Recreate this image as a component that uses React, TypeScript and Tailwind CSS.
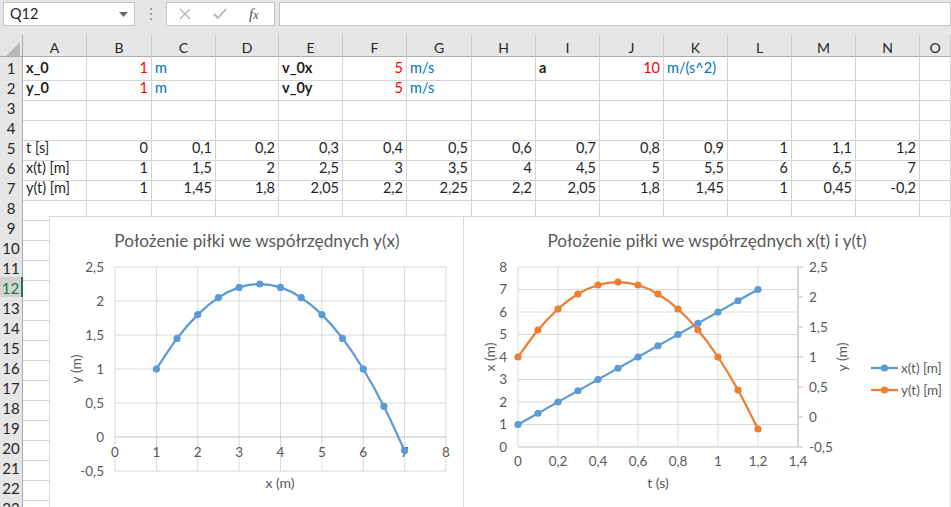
import React from 'react';

const letters = ['A', 'B', 'C', 'D', 'E', 'F', 'G', 'H', 'I', 'J', 'K', 'L', 'M', 'N', 'O'];

type Cell = { v: string; cls?: string; right?: boolean };

const t = ['0', '0,1', '0,2', '0,3', '0,4', '0,5', '0,6', '0,7', '0,8', '0,9', '1', '1,1', '1,2'];
const xs = ['1', '1,5', '2', '2,5', '3', '3,5', '4', '4,5', '5', '5,5', '6', '6,5', '7'];
const ys = ['1', '1,45', '1,8', '2,05', '2,2', '2,25', '2,2', '2,05', '1,8', '1,45', '1', '0,45', '-0,2'];

const red = 'text-[#ff0000]';
const blue = 'text-[#0070c0]';

// cell contents, keyed by row then column index (0 = A)
const rows: Record<number, Record<number, Cell>> = {
  1: {
    0: { v: 'x_0', cls: 'font-bold' },
    1: { v: '1', cls: red, right: true },
    2: { v: 'm', cls: blue },
    4: { v: 'v_0x', cls: 'font-bold' },
    5: { v: '5', cls: red, right: true },
    6: { v: 'm/s', cls: blue },
    8: { v: 'a', cls: 'font-bold' },
    9: { v: '10', cls: red, right: true },
    10: { v: 'm/(s^2)', cls: blue },
  },
  2: {
    0: { v: 'y_0', cls: 'font-bold' },
    1: { v: '1', cls: red, right: true },
    2: { v: 'm', cls: blue },
    4: { v: 'v_0y', cls: 'font-bold' },
    5: { v: '5', cls: red, right: true },
    6: { v: 'm/s', cls: blue },
  },
  5: Object.fromEntries([[0, { v: 't [s]' }], ...t.map((v, i) => [i + 1, { v, right: true }])]),
  6: Object.fromEntries([[0, { v: 'x(t) [m]' }], ...xs.map((v, i) => [i + 1, { v, right: true }])]),
  7: Object.fromEntries([[0, { v: 'y(t) [m]' }], ...ys.map((v, i) => [i + 1, { v, right: true }])]),
};

const smoothPath = (pts: [number, number][]) => {
  let d = `M${pts[0][0]},${pts[0][1]}`;
  for (let i = 0; i < pts.length - 1; i++) {
    const p0 = pts[i - 1] || pts[i];
    const p1 = pts[i];
    const p2 = pts[i + 1];
    const p3 = pts[i + 2] || p2;
    const c1x = p1[0] + (p2[0] - p0[0]) / 6;
    const c1y = p1[1] + (p2[1] - p0[1]) / 6;
    const c2x = p2[0] - (p3[0] - p1[0]) / 6;
    const c2y = p2[1] - (p3[1] - p1[1]) / 6;
    d += ` C${c1x},${c1y} ${c2x},${c2y} ${p2[0]},${p2[1]}`;
  }
  return d;
};

const xNum = [1, 1.5, 2, 2.5, 3, 3.5, 4, 4.5, 5, 5.5, 6, 6.5, 7];
const yNum = [1, 1.45, 1.8, 2.05, 2.2, 2.25, 2.2, 2.05, 1.8, 1.45, 1, 0.45, -0.2];
const tNum = [0, 0.1, 0.2, 0.3, 0.4, 0.5, 0.6, 0.7, 0.8, 0.9, 1, 1.1, 1.2];

const BLUE = '#5b9bd5';
const ORANGE = '#ed7d31';
const GRID = '#d9d9d9';
const LABEL = '#595959';
const TITLE_SIZE = '17.2';
const AXIS_SIZE = '14';

const fmt = (n: number) => String(Math.round(n * 10) / 10).replace('.', ',');

const ChartYX: React.FC = () => {
  const sx = (v: number) => 65 + v * 41.375;
  const sy = (v: number) => 50 + (2.5 - v) * 68;
  const pts = xNum.map((x, i) => [sx(x), sy(yNum[i])] as [number, number]);
  const yTicks = [2.5, 2, 1.5, 1, 0.5, 0, -0.5];
  return (
    <div className="absolute left-[49px] top-[216px] w-[415px] h-[300px] bg-white border border-[#d9d9d9]">
      <svg width="415" height="300" className="font-['Lato',sans-serif]">
        <text x="207" y="30" textAnchor="middle" fontSize={TITLE_SIZE} fill={LABEL}>
          Położenie piłki we współrzędnych y(x)
        </text>
        {[0, 1, 2, 3, 4, 5, 6, 7, 8].map((v) => (
          <line key={v} x1={sx(v)} x2={sx(v)} y1={50} y2={254} stroke={GRID} />
        ))}
        {yTicks.map((v) => (
          <line key={v} x1={65} x2={396} y1={sy(v)} y2={sy(v)} stroke={v === 0 ? '#bfbfbf' : GRID} />
        ))}
        {yTicks.map((v) => (
          <text key={v} x="54" y={sy(v) + 4.5} textAnchor="end" fontSize="13.5" fill={LABEL}>
            {fmt(v)}
          </text>
        ))}
        {[0, 1, 2, 3, 4, 5, 6, 7, 8].map((v) => (
          <text key={v} x={sx(v)} y="240" textAnchor="middle" fontSize="13.5" fill={LABEL}>
            {v}
          </text>
        ))}
        <text x="230" y="271" textAnchor="middle" fontSize={AXIS_SIZE} fill={LABEL}>x (m)</text>
        <text transform="translate(31,152) rotate(-90)" textAnchor="middle" fontSize={AXIS_SIZE} fill={LABEL}>y (m)</text>
        <path d={smoothPath(pts)} fill="none" stroke={BLUE} strokeWidth="2.25" />
        {pts.map((p, i) => (
          <circle key={i} cx={p[0]} cy={p[1]} r="3.6" fill={BLUE} />
        ))}
      </svg>
    </div>
  );
};

const ChartT: React.FC = () => {
  const sx = (v: number) => 54 + v * 200;
  const syL = (v: number) => 230 - v * 22.5;
  const syR = (v: number) => 50 + (2.5 - v) * 60;
  const xPts = tNum.map((tv, i) => [sx(tv), syL(xNum[i])] as [number, number]);
  const yPts = tNum.map((tv, i) => [sx(tv), syR(yNum[i])] as [number, number]);
  const rTicks = [2.5, 2, 1.5, 1, 0.5, 0, -0.5];
  const tTicks = [0, 0.2, 0.4, 0.6, 0.8, 1, 1.2, 1.4];
  return (
    <div className="absolute left-[463px] top-[216px] w-[488px] h-[300px] bg-white border border-[#d9d9d9]">
      <svg width="488" height="300" className="font-['Lato',sans-serif]">
        <text x="243" y="30" textAnchor="middle" fontSize={TITLE_SIZE} fill={LABEL}>
          Położenie piłki we współrzędnych x(t) i y(t)
        </text>
        {tTicks.map((v) => (
          <line key={v} x1={sx(v)} x2={sx(v)} y1={50} y2={230} stroke={GRID} />
        ))}
        {[1, 2, 3, 4, 5, 6, 7, 8].map((v) => (
          <line key={v} x1={54} x2={334} y1={syL(v)} y2={syL(v)} stroke={GRID} />
        ))}
        <line x1={54} x2={334} y1={230} y2={230} stroke="#bfbfbf" />
        <line x1={334} x2={334} y1={50} y2={230} stroke="#bfbfbf" />
        {rTicks.map((v) => (
          <line key={v} x1={334} x2={339} y1={syR(v)} y2={syR(v)} stroke="#bfbfbf" />
        ))}
        {[0, 1, 2, 3, 4, 5, 6, 7, 8].map((v) => (
          <text key={v} x="43" y={syL(v) + 4.5} textAnchor="end" fontSize="13.5" fill={LABEL}>
            {v}
          </text>
        ))}
        {rTicks.map((v) => (
          <text key={v} x="345" y={syR(v) + 4.5} fontSize="13.5" fill={LABEL}>
            {fmt(v)}
          </text>
        ))}
        {tTicks.map((v) => (
          <text key={v} x={sx(v)} y="249" textAnchor="middle" fontSize="13.5" fill={LABEL}>
            {fmt(v)}
          </text>
        ))}
        <text x="194" y="271" textAnchor="middle" fontSize={AXIS_SIZE} fill={LABEL}>t (s)</text>
        <text transform="translate(31,140) rotate(-90)" textAnchor="middle" fontSize={AXIS_SIZE} fill={LABEL}>x (m)</text>
        <text transform="translate(383,140) rotate(-90)" textAnchor="middle" fontSize={AXIS_SIZE} fill={LABEL}>y (m)</text>
        <path d={smoothPath(xPts)} fill="none" stroke={BLUE} strokeWidth="2.25" />
        {xPts.map((p, i) => (
          <circle key={i} cx={p[0]} cy={p[1]} r="3.6" fill={BLUE} />
        ))}
        <path d={smoothPath(yPts)} fill="none" stroke={ORANGE} strokeWidth="2.25" />
        {yPts.map((p, i) => (
          <circle key={i} cx={p[0]} cy={p[1]} r="3.6" fill={ORANGE} />
        ))}
        {/* legend */}
        <line x1="407" x2="434" y1="151" y2="151" stroke={BLUE} strokeWidth="2.25" />
        <circle cx="420.5" cy="151" r="3.6" fill={BLUE} />
        <text x="437" y="155.5" fontSize="13.5" fill={LABEL}>x(t) [m]</text>
        <line x1="407" x2="434" y1="173" y2="173" stroke={ORANGE} strokeWidth="2.25" />
        <circle cx="420.5" cy="173" r="3.6" fill={ORANGE} />
        <text x="437" y="177.5" fontSize="13.5" fill={LABEL}>y(t) [m]</text>
      </svg>
    </div>
  );
};

const App: React.FC = () => {
  const gridCols = 'grid grid-cols-[23px_64px_65px_64px_63px_64px_64px_65px_64px_64px_64px_64px_64px_64px_64px_1fr]';

  return (
    <div className="relative w-[951px] h-[507px] overflow-hidden bg-white font-['Lato',sans-serif] text-[#1f1f1f]">
      {/* Formula bar */}
      <div className="h-[35px] bg-[#e6e6e6] flex items-start pt-[2px] pl-[3px]">
        <div className="w-[132px] h-[24px] bg-white border border-[#c6c6c6] flex items-center justify-between pl-[6px] pr-[6px] text-[14.5px] text-[#262626]">
          <span>Q12</span>
          <svg width="9" height="5" viewBox="0 0 9 5">
            <path d="M0 0 L9 0 L4.5 5 Z" fill="#6b6b6b" />
          </svg>
        </div>
        <div className="w-[31px] h-[24px] flex flex-col items-center justify-center gap-[3px]">
          <span className="w-[2px] h-[2px] bg-[#a0a0a0]" />
          <span className="w-[2px] h-[2px] bg-[#a0a0a0]" />
          <span className="w-[2px] h-[2px] bg-[#a0a0a0]" />
        </div>
        <div className="w-[109px] h-[24px] bg-white border border-[#c6c6c6] flex items-center pl-[12px] gap-[22px]">
          <svg width="12" height="12" viewBox="0 0 12 12">
            <path d="M1 1 L11 11 M11 1 L1 11" stroke="#b4b4b4" strokeWidth="1.4" />
          </svg>
          <svg width="14" height="12" viewBox="0 0 14 12">
            <path d="M1 6 L5 10 L13 1" stroke="#b4b4b4" strokeWidth="1.8" fill="none" />
          </svg>
          <span className="font-['Liberation_Serif',serif] italic text-[15px] text-[#505050] leading-none">
            f<span className="text-[12px]">x</span>
          </span>
        </div>
        <div className="ml-[4px] flex-1 h-[24px] bg-white border border-[#c6c6c6]" />
      </div>

      {/* Column headers */}
      <div className={`${gridCols} h-[22px] bg-[#e6e6e6] border-b border-[#ababab]`}>
        <div className="border-r border-[#ababab] flex items-end justify-end pr-[2px] pb-[2px]">
          <svg width="14" height="14" viewBox="0 0 14 14">
            <path d="M14 0 L14 14 L0 14 Z" fill="#b8b8b8" />
          </svg>
        </div>
        {letters.map((l) => (
          <div key={l} className="border-r border-[#c8c8c8] flex items-center justify-center text-[14px] text-[#262626] pt-[2px]">
            {l}
          </div>
        ))}
      </div>

      {/* Rows */}
      {Array.from({ length: 23 }, (_, r) => r + 1).map((r) => (
        <div key={r} className={`${gridCols} h-[20px]`}>
          <div
            className={
              r === 12
                ? 'bg-[#d2d2d2] border-r-2 border-[#217346] border-b border-b-[#c8c8c8] flex items-center justify-center text-[15px] text-[#217346]'
                : 'bg-[#e6e6e6] border-r border-[#ababab] border-b border-b-[#c8c8c8] flex items-center justify-center text-[15px] text-[#262626]'
            }
          >
            {r}
          </div>
          {letters.map((l, c) => {
            const cell = rows[r]?.[c];
            return (
              <div
                key={l}
                className={`border-r border-b border-[#d4d4d4] flex items-center px-[3px] text-[14.5px] whitespace-nowrap ${
                  cell?.right ? 'justify-end' : 'justify-start'
                } ${cell?.cls ?? ''}`}
              >
                {cell?.v}
              </div>
            );
          })}
        </div>
      ))}

      <ChartYX />
      <ChartT />
    </div>
  );
};

export default App;
